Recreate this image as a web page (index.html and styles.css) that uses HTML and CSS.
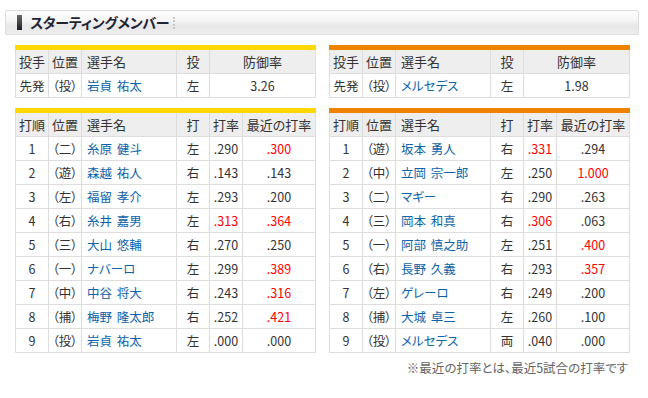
FILE: index.html
```html
<!DOCTYPE html>
<html lang="ja">
<head>
<meta charset="utf-8">
<title>スターティングメンバー</title>
<link rel="stylesheet" href="styles.css">
</head>
<body>
<div class="page">
  <div class="title-box">
    <span class="title-mark"></span>
    <h2 class="title">スターティングメンバー</h2>
    <span class="title-dots"></span>
  </div>

  <div class="teams">
    <div class="team team-tigers">
      <table class="tbl pitcher">
        <colgroup><col class="c-a"><col class="c-b"><col class="c-name"><col class="c-d"><col class="c-era"></colgroup>
        <thead><tr><th>投手</th><th>位置</th><th class="l">選手名</th><th>投</th><th>防御率</th></tr></thead>
        <tbody><tr><td>先発</td><td>（投）</td><td class="name">岩貞 祐太</td><td>左</td><td>3.26</td></tr></tbody>
      </table>
      <table class="tbl batters">
        <colgroup><col class="c-a"><col class="c-b"><col class="c-name"><col class="c-d"><col class="c-avg"><col class="c-recent"></colgroup>
        <thead><tr><th>打順</th><th>位置</th><th class="l">選手名</th><th>打</th><th>打率</th><th>最近の打率</th></tr></thead>
        <tbody>
          <tr><td>1</td><td>（二）</td><td class="name">糸原 健斗</td><td>左</td><td>.290</td><td class="hot">.300</td></tr>
          <tr><td>2</td><td>（遊）</td><td class="name">森越 祐人</td><td>右</td><td>.143</td><td>.143</td></tr>
          <tr><td>3</td><td>（左）</td><td class="name">福留 孝介</td><td>左</td><td>.293</td><td>.200</td></tr>
          <tr><td>4</td><td>（右）</td><td class="name">糸井 嘉男</td><td>左</td><td class="hot">.313</td><td class="hot">.364</td></tr>
          <tr><td>5</td><td>（三）</td><td class="name">大山 悠輔</td><td>右</td><td>.270</td><td>.250</td></tr>
          <tr><td>6</td><td>（一）</td><td class="name">ナバーロ</td><td>左</td><td>.299</td><td class="hot">.389</td></tr>
          <tr><td>7</td><td>（中）</td><td class="name">中谷 将大</td><td>右</td><td>.243</td><td class="hot">.316</td></tr>
          <tr><td>8</td><td>（捕）</td><td class="name">梅野 隆太郎</td><td>右</td><td>.252</td><td class="hot">.421</td></tr>
          <tr><td>9</td><td>（投）</td><td class="name">岩貞 祐太</td><td>左</td><td>.000</td><td>.000</td></tr>
        </tbody>
      </table>
    </div>

    <div class="team team-giants">
      <table class="tbl pitcher">
        <colgroup><col class="c-a"><col class="c-b"><col class="c-name"><col class="c-d"><col class="c-era"></colgroup>
        <thead><tr><th>投手</th><th>位置</th><th class="l">選手名</th><th>投</th><th>防御率</th></tr></thead>
        <tbody><tr><td>先発</td><td>（投）</td><td class="name">メルセデス</td><td>左</td><td>1.98</td></tr></tbody>
      </table>
      <table class="tbl batters">
        <colgroup><col class="c-a"><col class="c-b"><col class="c-name"><col class="c-d"><col class="c-avg"><col class="c-recent"></colgroup>
        <thead><tr><th>打順</th><th>位置</th><th class="l">選手名</th><th>打</th><th>打率</th><th>最近の打率</th></tr></thead>
        <tbody>
          <tr><td>1</td><td>（遊）</td><td class="name">坂本 勇人</td><td>右</td><td class="hot">.331</td><td>.294</td></tr>
          <tr><td>2</td><td>（中）</td><td class="name">立岡 宗一郎</td><td>左</td><td>.250</td><td class="hot">1.000</td></tr>
          <tr><td>3</td><td>（二）</td><td class="name">マギー</td><td>右</td><td>.290</td><td>.263</td></tr>
          <tr><td>4</td><td>（三）</td><td class="name">岡本 和真</td><td>右</td><td class="hot">.306</td><td>.063</td></tr>
          <tr><td>5</td><td>（一）</td><td class="name">阿部 慎之助</td><td>左</td><td>.251</td><td class="hot">.400</td></tr>
          <tr><td>6</td><td>（右）</td><td class="name">長野 久義</td><td>右</td><td>.293</td><td class="hot">.357</td></tr>
          <tr><td>7</td><td>（左）</td><td class="name">ゲレーロ</td><td>右</td><td>.249</td><td>.200</td></tr>
          <tr><td>8</td><td>（捕）</td><td class="name">大城 卓三</td><td>左</td><td>.260</td><td>.100</td></tr>
          <tr><td>9</td><td>（投）</td><td class="name">メルセデス</td><td>両</td><td>.040</td><td>.000</td></tr>
        </tbody>
      </table>
      <p class="note">※最近の打率とは、最近5試合の打率です</p>
    </div>
  </div>
</div>
</body>
</html>
```

FILE: styles.css
```css
html, body {
  margin: 0;
  padding: 0;
  background: #ffffff;
}

body {
  font-family: "Noto Sans CJK JP", "Noto Sans", "Liberation Sans", sans-serif;
  font-feature-settings: "palt";
  color: #333333;
  font-size: 12.5px;
}

.page {
  padding: 10px 0 0 5px;
  width: 634px;
}

.title-box {
  display: flex;
  align-items: center;
  height: 23px;
  border: 1px solid #dcdcdc;
  border-radius: 2px;
  background: linear-gradient(to bottom, #fdfdfd 0%, #f6f6f6 40%, #e7e7e7 65%, #eeeeee 100%);
  padding-left: 11px;
}

.title-mark {
  width: 5px;
  height: 15px;
  background: linear-gradient(to bottom, #6a6a6a, #1e1e1e);
  margin-right: 8px;
}

.title {
  margin: 0;
  font-size: 14px;
  font-weight: bold;
  color: #222233;
  line-height: 23px;
  letter-spacing: -0.2px;
}

.title-dots {
  width: 0;
  height: 12px;
  border-left: 2px dotted #c8c8c8;
  margin-left: 4px;
}

.teams {
  display: flex;
  gap: 14px;
  padding-left: 10px;
  margin-top: 10px;
}

.team {
  width: 300px;
  display: flex;
  flex-direction: column;
  gap: 10px;
}

.tbl {
  width: 300px;
  table-layout: fixed;
  border-collapse: collapse;
  border-top: 5px solid #ffd800;
}

.team-giants .tbl {
  border-top-color: #ef8200;
}

.tbl th,
.tbl td {
  border: 1px solid #dddddd;
  height: 23px;
  padding: 0;
  line-height: 23px;
  text-align: center;
  white-space: nowrap;
  overflow: hidden;
}

.tbl thead tr:first-child th {
  border-top: 1px solid #dddddd;
}

.tbl th {
  background: #eeeeee;
  font-weight: normal;
  color: #333333;
  font-size: 13px;
}

.tbl th.l,
.tbl td.name {
  text-align: left;
  padding-left: 5px;
}

.tbl td.name {
  color: #0b63a8;
  word-spacing: 2px;
}

.tbl td.hot {
  color: #ff0000;
}

.c-a { width: 33px; }
.c-b { width: 33px; }
.c-name { width: 95px; }
.c-d { width: 33px; }
.c-era { width: 106px; }
.c-avg { width: 33px; }
.c-recent { width: 73px; }

.note {
  margin: -4px 0 0;
  text-align: right;
  color: #666666;
  font-size: 12.5px;
  line-height: 18px;
  padding-right: 1px;
}
```
